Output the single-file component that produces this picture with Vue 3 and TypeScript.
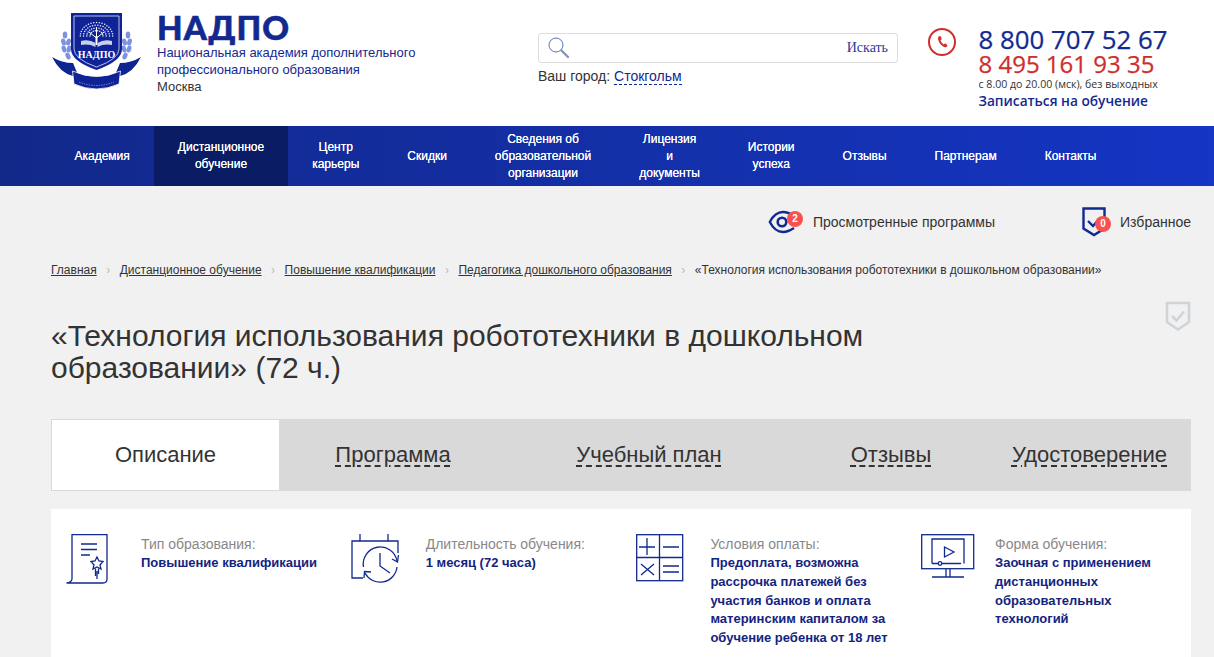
<template>
  <div class="page">
    <header class="top">
      <div class="brand">
        <svg class="logo" viewBox="0 0 100 90" width="100" height="90">
          <path d="M6 52 Q16 58 27 58 L32 70 L27 71 Q14 68 6 52 Z M95 52 Q85 58 74 58 L69 70 L74 71 Q87 68 95 52 Z" fill="#0d2590" />
          <g fill="#7c92e0">
            <ellipse v-for="l in laurel" :key="l.x + '-' + l.y" :cx="l.x" :cy="l.y" rx="2.300" ry="3.600" :transform="`rotate(${l.r} ${l.x} ${l.y})`" />
          </g>
          <path d="M25 8 H76 V44 Q76 56 50.500 65 Q25 56 25 44 Z" fill="#0f2397" />
          <path d="M28 11 H73 V44 Q73 54 50.500 62 Q28 54 28 44 Z" fill="none" stroke="#dfe4fa" stroke-width="0.800" />
          <path d="M26.500 66 Q50.500 77 74.500 66 L73 79 Q50.500 89 28 79 Z" fill="#0f2397" stroke="#fff" stroke-width="0.800" />
          <path d="M33 77 Q50.500 84 68 77" fill="none" stroke="#8d9de0" stroke-width="0.800" stroke-dasharray="1.500 1" />
          <circle v-for="d in crown" :key="d.x + '-' + d.y" :cx="d.x" :cy="d.y" r="0.750" fill="#f2f4fd" />
          <path d="M50.500 22 V40 M50.500 33 L43 27 M50.500 33 L58 27" stroke="#fff" stroke-width="1" fill="none" />
          <path d="M50.500 31 V40" stroke="#fff" stroke-width="2" />
          <path d="M35 36 Q43 34 49.500 38 V42 Q43 38.500 35 40 Z M66 36 Q58 34 51.500 38 V42 Q58 38.500 66 40 Z" fill="#c8d0ef" />
          <text x="50.500" y="52.500" text-anchor="middle" class="logo-text">НАДПО</text>
        </svg>
        <div class="brand-text">
          <div class="brand-name">НАДПО</div>
          <div class="brand-sub">Национальная академия дополнительного<br />профессионального образования</div>
          <div class="brand-city">Москва</div>
        </div>
      </div>

      <div class="search-col">
        <div class="search">
          <svg width="22" height="22" viewBox="0 0 22 22" fill="none">
            <circle cx="8" cy="8" r="7" stroke="#5a6fc0" stroke-width="1" />
            <path d="M13.500 13.500 L20 20" stroke="#8a94b0" stroke-width="2.400" stroke-linecap="round" />
          </svg>
          <span class="search-btn">Искать</span>
        </div>
        <div class="city">Ваш город: <a>Стокгольм</a></div>
      </div>

      <div class="contacts">
        <svg class="phone-ic" width="30" height="30" viewBox="0 0 30 30" fill="none">
          <circle cx="15" cy="15" r="13" stroke="#cf2e2e" stroke-width="2" />
          <path d="M11.500 9.500 L13.500 9 L14.800 12 L13.500 13.200 Q14.500 16 16.800 17.500 L18.200 16.300 L20.500 18.300 L19.500 20 Q18 21 15.500 19 Q11 15.500 11 11 Z" fill="#cf2e2e" />
        </svg>
        <div class="phones">
          <div class="phone1">8 800 707 52 67</div>
          <div class="phone2">8 495 161 93 35</div>
          <div class="hours">с 8.00 до 20.00 (мск), без выходных</div>
          <div class="signup">Записаться на обучение</div>
        </div>
      </div>
    </header>

    <nav class="nav">
      <a v-for="item in navItems" :key="item.label" class="nav-item" :class="{ active: item.active }" v-html="item.label"></a>
    </nav>

    <main class="content">
      <div class="tools">
        <div class="tool viewed">
          <span class="tool-ic eye">
            <svg width="27" height="24" viewBox="0 0 27 24" fill="none">
              <path d="M26 6 Q20 2 15 2 Q7 2 1.800 12 Q7 22 15 22 Q20 22 26 18" stroke="#12298f" stroke-width="2.400" />
              <circle cx="14" cy="12" r="4.300" stroke="#12298f" stroke-width="2.600" />
            </svg>
            <b class="badge eye-badge">2</b>
          </span>
          Просмотренные программы
        </div>
        <div class="tool">
          <span class="tool-ic fav">
            <svg width="24" height="30" viewBox="0 0 24 30" fill="none">
              <path d="M1.500 1.500 H22.500 V21.500 L12 28 L1.500 21.500 Z" stroke="#12298f" stroke-width="2.400" />
              <path d="M6 14 L11 19 L18 11" stroke="#12298f" stroke-width="2.400" />
            </svg>
            <b class="badge fav-badge">0</b>
          </span>
          Избранное
        </div>
      </div>

      <div class="crumbs">
        <template v-for="c in crumbs" :key="c">
          <a>{{ c }}</a>
          <i class="sep">›</i>
        </template>
        <span>«Технология использования робототехники в дошкольном образовании»</span>
      </div>

      <div class="title-row">
        <h1>«Технология использования робототехники в дошкольном образовании» (72 ч.)</h1>
        <svg width="26" height="31" viewBox="0 0 26 31" fill="none">
          <path d="M2 2 H24 V21 L13 28.500 L2 21 Z" stroke="#cfd4d9" stroke-width="2.600" />
          <path d="M7 15 L11.500 19.500 L19 10.500" stroke="#cfd4d9" stroke-width="2.600" />
        </svg>
      </div>

      <div class="tabs">
        <div class="tab current">Описание</div>
        <div v-for="t in tabs" :key="t.label" class="tab" :style="{ width: t.width + 'px' }"><span>{{ t.label }}</span></div>
      </div>

      <section class="facts">
        <div class="fact">
          <div class="fact-ic">
            <svg width="42" height="50" viewBox="0 0 42 50" fill="none" stroke="#12298f" stroke-width="1.300">
              <path d="M6 0.700 H41 V45 Q41 49 37 49 H0.500 Q5.500 48.500 6 45 Z" />
              <path d="M15 10 H31 M15 15.500 H31 M15 21 H24" />
              <path d="M31 23 L33 27 L37 27.500 L34 31 L35 35 L31 33 L27 35 L28 31 L25 27.500 L29 27 Z" />
              <path d="M29.500 34.500 V42 M32.500 34.500 V40 M31 37 V45" />
            </svg>
          </div>
          <div class="fact-text">
            <div class="fact-label">Тип образования:</div>
            <div class="fact-value">Повышение квалификации</div>
          </div>
        </div>
        <div class="fact">
          <div class="fact-ic">
            <svg width="49" height="50" viewBox="0 0 49 50" fill="none" stroke="#12298f" stroke-width="1.300">
              <path d="M9 0 V7 H37 V0" />
              <path d="M9 7 H1 V44 H12 M37 7 H47 V19" />
              <path d="M12.500 33 A17 17 0 0 1 46 27 M46 33 A17 17 0 0 1 14 39" />
              <path d="M41 25 L46.500 28 L47.500 21 M20 38 L13.500 37.500 L13 44" />
              <path d="M29 19 V32 L39 39" />
            </svg>
          </div>
          <div class="fact-text">
            <div class="fact-label">Длительность обучения:</div>
            <div class="fact-value">1 месяц (72 часа)</div>
          </div>
        </div>
        <div class="fact">
          <div class="fact-ic">
            <svg width="48" height="48" viewBox="0 0 48 48" fill="none" stroke="#12298f" stroke-width="1.300">
              <rect x="0.700" y="0.700" width="46" height="46" />
              <path d="M23.500 1 V47 M1 23.500 H47" />
              <path d="M3 13 H19 M11 4 V21 M27 13 H43" />
              <path d="M5 30 L18 41 M18 30 L5 41 M27 32 H43 M27 38 H43" />
            </svg>
          </div>
          <div class="fact-text">
            <div class="fact-label">Условия оплаты:</div>
            <div class="fact-value">Предоплата, возможна рассрочка платежей без участия банков и оплата материнским капиталом за обучение ребенка от 18 лет</div>
          </div>
        </div>
        <div class="fact">
          <div class="fact-ic">
            <svg width="54" height="44" viewBox="0 0 54 44" fill="none" stroke="#12298f" stroke-width="1.300">
              <rect x="0.700" y="0.700" width="52" height="34" />
              <path d="M11 29.500 V5 H43 V29.500" />
              <circle cx="19" cy="29.500" r="1.800" />
              <path d="M11 29.500 H17 M21 29.500 H40" />
              <path d="M23.500 13 L33 18 L23.500 23 Z" />
              <path d="M25 35 V43 M29 35 V43 M11 43 H43" />
            </svg>
          </div>
          <div class="fact-text">
            <div class="fact-label">Форма обучения:</div>
            <div class="fact-value">Заочная с применением дистанционных образовательных технологий</div>
          </div>
        </div>
      </section>
    </main>
  </div>
</template>

<script setup lang="ts">
const navItems = [
  { label: 'Академия' },
  { label: 'Дистанционное<br>обучение', active: true },
  { label: 'Центр<br>карьеры' },
  { label: 'Скидки' },
  { label: 'Сведения об<br>образовательной<br>организации' },
  { label: 'Лицензия<br>и<br>документы' },
  { label: 'Истории<br>успеха' },
  { label: 'Отзывы' },
  { label: 'Партнерам' },
  { label: 'Контакты' },
]

const crumbs = ['Главная', 'Дистанционное обучение', 'Повышение квалификации', 'Педагогика дошкольного образования']

const tabs = [
  { label: 'Программа', width: 228 },
  { label: 'Учебный план', width: 284 },
  { label: 'Отзывы', width: 200 },
  { label: 'Удостоверение', width: 197 },
]

// tree crown of the crest, dots on half rings
const crown: { x: number; y: number }[] = []
for (const r of [6, 9, 12, 15]) {
  const steps = r + 3
  for (let i = 0; i <= steps; i++) {
    const a = Math.PI + (Math.PI * i) / steps
    crown.push({ x: +(50.5 + r * 1.08 * Math.cos(a)).toFixed(1), y: +(31 + r * 0.9 * Math.sin(a)).toFixed(1) })
  }
}

const laurel = [
  { x: 19, y: 30, r: 0 },
  { x: 17.500, y: 37, r: -15 },
  { x: 22.500, y: 37, r: 15 },
  { x: 18, y: 44, r: -15 },
  { x: 23, y: 44, r: 15 },
  { x: 22, y: 51, r: -25 },
  { x: 82, y: 30, r: 0 },
  { x: 83.500, y: 37, r: 15 },
  { x: 78.500, y: 37, r: -15 },
  { x: 83, y: 44, r: 15 },
  { x: 78, y: 44, r: -15 },
  { x: 79, y: 51, r: 25 },
]
</script>

<style>
html, body {
  margin: 0;
  background: #f1f1f1;
}
</style>

<style scoped>
.page {
  height: 657px;
  overflow: hidden;
  font-family: "Liberation Sans", Arial, sans-serif;
  color: #333;
}
.top {
  display: flex;
  height: 126px;
  background: #fff;
  box-sizing: border-box;
}
.brand {
  display: flex;
  width: 488px;
  padding: 5px 0 0 46px;
  box-sizing: border-box;
}
.logo {
  flex: none;
}
.logo-text {
  font-family: "Liberation Serif", serif;
  font-size: 10px;
  font-weight: 700;
  fill: #fff;
}
.brand-text {
  margin-left: 11px;
  padding-top: 6px;
  white-space: nowrap;
}
.brand-name {
  font-family: Lato, sans-serif;
  font-weight: 900;
  font-size: 33px;
  line-height: 33px;
  letter-spacing: 1.100px;
  color: #12298f;
  -webkit-text-stroke: 0.6px #12298f;
}
.brand-sub,
.brand-city {
  font-size: 13px;
  line-height: 17px;
  color: #12298f;
}
.brand-city {
  color: #333;
}
.search-col {
  width: 360px;
  margin: 33px 0 0 50px;
}
.search {
  display: flex;
  align-items: center;
  justify-content: space-between;
  height: 30px;
  padding: 0 9px;
  box-sizing: border-box;
  border: 1px solid #ddd;
  border-radius: 3px;
}
.search-btn {
  font-family: "Liberation Serif", serif;
  font-size: 14px;
  color: #2b3a9a;
}
.city {
  margin-top: 5px;
  font-size: 14px;
  color: #333;
}
.city a {
  color: #12298f;
  border-bottom: 1px dashed #12298f;
}
.contacts {
  display: flex;
  margin: 26px 0 0 29px;
}
.phone-ic {
  flex: none;
  margin: 1px 21.500px 0 0;
}
.phones {
  font-family: "Open Sans", sans-serif;
}
.phone1,
.phone2 {
  font-weight: 500;
  white-space: nowrap;
  -webkit-text-stroke: 0.25px currentColor;
}
.phone1 {
  font-size: 25.800px;
  line-height: 26px;
  color: #12298f;
}
.phone2 {
  font-size: 24px;
  line-height: 23px;
  color: #cf2e2e;
}
.hours {
  margin-top: 2px;
  font-size: 10.600px;
  font-weight: 500;
  line-height: 14px;
  color: #333;
  white-space: nowrap;
}
.signup {
  font-size: 13.700px;
  font-weight: 600;
  color: #12298f;
  white-space: nowrap;
}
.nav {
  display: flex;
  height: 60px;
  padding-left: 50.500px;
  background: linear-gradient(90deg, #12298a, #1535c4);
}
.nav-item {
  display: flex;
  align-items: center;
  padding: 0 24px;
  font-size: 12px;
  line-height: 17px;
  text-align: center;
  color: #fff;
  text-shadow: 0 0 0.4px #fff;
}
.nav-item.active {
  background: #0a1c63;
}
.content {
  padding: 0 23px 0 51px;
}
.tools {
  display: flex;
  justify-content: flex-end;
  align-items: center;
  height: 72px;
  font-size: 14px;
  color: #333;
}
.tool {
  display: flex;
  align-items: center;
}
.tool.viewed {
  margin-right: 87px;
}
.tool-ic {
  position: relative;
  display: flex;
}
.tool-ic.eye {
  margin-right: 18px;
}
.tool-ic.fav {
  margin-right: 14px;
}
.badge {
  position: absolute;
  width: 16px;
  height: 16px;
  border-radius: 50%;
  background: #fb5050;
  color: #fff;
  font-size: 10px;
  line-height: 16px;
  text-align: center;
}
.eye-badge {
  right: -8px;
  top: 1px;
}
.fav-badge {
  right: -5px;
  bottom: 5px;
}
.crumbs {
  margin-top: 3px;
  font-size: 12px;
  line-height: 18px;
  white-space: nowrap;
}
.crumbs a {
  text-decoration: underline;
}
.sep {
  margin: 0 9.500px;
  font-style: normal;
  color: #bbb;
}
.title-row {
  display: flex;
  justify-content: space-between;
  margin-top: 22px;
  height: 118px;
}
h1 {
  width: 880px;
  margin: 19px 0 0;
  font-size: 30px;
  font-weight: 400;
  line-height: 32px;
  color: #333;
}
.tabs {
  display: flex;
  height: 72px;
  background: #d9d9d9;
}
.tab {
  display: flex;
  align-items: center;
  justify-content: center;
  flex: none;
  width: 228px;
  font-size: 22px;
  color: #333;
}
.tab span {
  text-decoration: underline dashed #333;
  text-decoration-thickness: 1.500px;
  text-underline-offset: 3px;
}
.tab.current {
  background: #fff;
  border: 1px solid #d9d9d9;
  border-right: 0;
  box-sizing: border-box;
}
.facts {
  display: grid;
  grid-template-columns: repeat(4, 284.700px);
  margin-top: 18px;
  padding: 25px 0 0 15px;
  height: 200px;
  background: #fff;
}
.fact {
  display: flex;
}
.fact:nth-child(n + 3) svg {
  margin-left: 1px;
}
.fact-ic {
  flex: none;
  width: 75px;
}
.fact-text {
  width: 186px;
  padding-top: 1px;
}
.fact-label {
  font-size: 14px;
  line-height: 19px;
  color: #888;
}
.fact-value {
  font-size: 13px;
  line-height: 18.800px;
  font-weight: 700;
  color: #13247f;
}
</style>
